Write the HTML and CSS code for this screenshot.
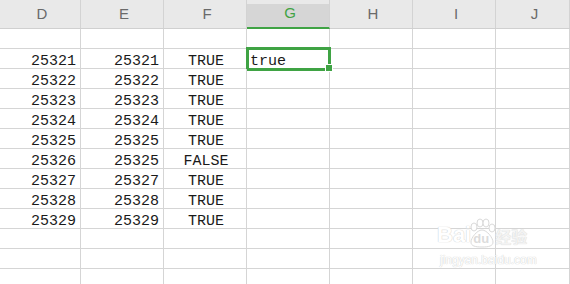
FILE: index.html
```html
<!DOCTYPE html>
<html lang="en">
<head>
  <meta charset="UTF-8" />
  <title>Sheet</title>
  <link rel="stylesheet" href="styles.css">
</head>
<body>
  <div class="sheet">
    <div class="row head">
      <div class="cell">D</div>
      <div class="cell">E</div>
      <div class="cell">F</div>
      <div class="cell active-col">G</div>
      <div class="cell">H</div>
      <div class="cell">I</div>
      <div class="cell">J</div>
    </div>
    <div id="rows"></div>
  </div>

  <div class="watermark">
    <div class="wm-logo">
      <span>Bai</span>
      <span class="paw">
        <svg width="30" height="30" viewBox="0 0 30 30">
          <g fill="#fff" stroke="#dadada" stroke-width="1">
            <ellipse cx="7" cy="9" rx="3" ry="4"/>
            <ellipse cx="13" cy="5" rx="3" ry="4"/>
            <ellipse cx="19" cy="5" rx="3" ry="4"/>
            <ellipse cx="25" cy="10" rx="3" ry="4"/>
            <path d="M15 12c-5 0-11 8-11 12 0 4 4 5 11 5s11-1 11-5c0-4-6-12-11-12z"/>
          </g>
        </svg>
        <span class="du">du</span>
      </span>
      <span class="cn">经验</span>
    </div>
    <div class="wm-site">jingyan.baidu.com</div>
  </div>

  <script>
    const data = [
      null,
      [25321, 25321, 'TRUE', 'true'],
      [25322, 25322, 'TRUE'],
      [25323, 25323, 'TRUE'],
      [25324, 25324, 'TRUE'],
      [25325, 25325, 'TRUE'],
      [25326, 25325, 'FALSE'],
      [25327, 25327, 'TRUE'],
      [25328, 25328, 'TRUE'],
      [25329, 25329, 'TRUE'],
      null, null, null
    ];

    const rows = document.getElementById('rows');
    data.forEach((r, i) => {
      const row = document.createElement('div');
      row.className = 'row';
      for (let c = 0; c < 7; c++) {
        const cell = document.createElement('div');
        cell.className = 'cell';
        if (r && r[c] !== undefined) {
          cell.textContent = r[c];
          if (c < 2) cell.classList.add('num');
          if (c === 2) cell.classList.add('bool');
          if (c === 3) cell.classList.add('text');
        }
        if (i === 1 && c === 3) cell.classList.add('selected');
        row.appendChild(cell);
      }
      rows.appendChild(row);
    });
  </script>
</body>
</html>
```

FILE: styles.css
```css
* {
  margin: 0;
  padding: 0;
  box-sizing: border-box;
}

body {
  width: 570px;
  height: 284px;
  overflow: hidden;
  background: #fff;
  position: relative;
}

.sheet {
  width: 570px;
}

.row {
  display: flex;
  height: 20px;
  border-bottom: 1px solid #d5d5d5;
}

.cell {
  width: 83px;
  flex: none;
  border-right: 1px solid #d5d5d5;
  font-family: "Liberation Mono", "DejaVu Sans Mono", monospace;
  font-size: 15px;
  line-height: 15px;
  padding-top: 5px;
  color: #1a1a1a;
  position: relative;
  white-space: nowrap;
}

.cell:first-child {
  width: 81px;
}

.cell:last-child {
  width: 74px;
}

.num {
  text-align: right;
  padding-right: 4px;
}

.bool {
  text-align: center;
  padding-left: 2px;
}

.text {
  padding-left: 3px;
}

.selected::after {
  content: "";
  position: absolute;
  top: -2px;
  left: -1px;
  right: -2px;
  bottom: -3px;
  border: 3px solid #3fa344;
}

.selected::before {
  content: "";
  position: absolute;
  right: -4px;
  bottom: -4px;
  width: 6px;
  height: 6px;
  background: #3fa344;
  border: 1px solid #fff;
  z-index: 1;
}

.head {
  height: 29px;
  background: #e9e9e9;
  border-bottom: 1px solid #d0d0d0;
}

.head .cell {
  font-family: "Liberation Sans", Arial, sans-serif;
  font-size: 15px;
  line-height: 28px;
  padding-top: 0;
  text-align: center;
  color: #6a6a6a;
  border-right-color: #d3d3d3;
  padding-left: 4px;
}

.head .active-col {
  background: linear-gradient(#e9e9e9 0 4px, #d6d6d6 4px);
  color: #3fa344;
  border-bottom: 2px solid #3fa344;
  line-height: 26px;
  height: 29px;
}

.watermark {
  position: absolute;
  left: 437px;
  top: 218px;
  color: #fff;
  font-family: "Liberation Sans", Arial, sans-serif;
  text-shadow: 0 0 1px #d0d0d0, 0 0 1px #d0d0d0;
}

.wm-logo {
  display: flex;
  align-items: flex-end;
  height: 30px;
  font-size: 22px;
  font-weight: bold;
  line-height: 26px;
  white-space: nowrap;
}

.paw {
  position: relative;
  flex: none;
  width: 28px;
  height: 30px;
  margin-left: -4px;
}

.paw svg {
  position: absolute;
  left: 0;
  top: 0;
}

.du {
  position: absolute;
  left: 6px;
  bottom: 3px;
  font-size: 13px;
  line-height: 13px;
  color: #dcdcdc;
  text-shadow: none;
}

.cn {
  flex: none;
  font-family: "Noto Sans CJK SC", sans-serif;
  font-size: 16px;
  line-height: 24px;
  color: #f3f3f3;
  text-shadow: 0 0 1px #c8c8c8;
}

.wm-site {
  font-size: 12px;
  line-height: 14px;
  margin-top: 5px;
  padding-left: 3px;
}
```
